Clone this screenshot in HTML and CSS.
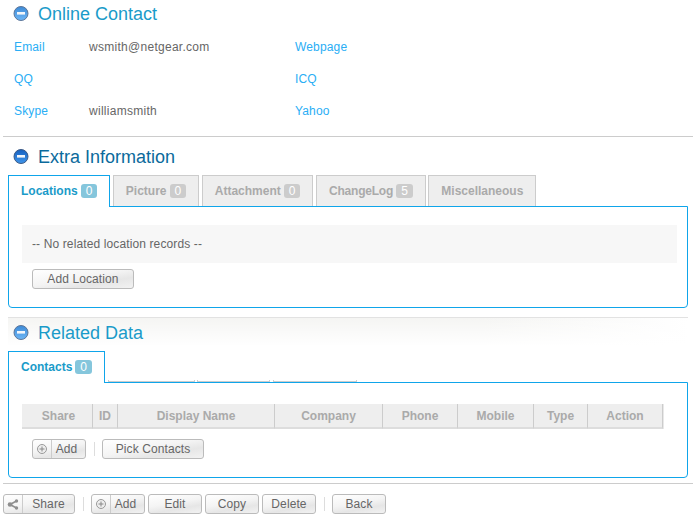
FILE: index.html

```html
<!DOCTYPE html>
<html lang="en">
<head>
  <meta charset="UTF-8">
  <meta name="viewport" content="width=device-width, initial-scale=1.0">
  <title>Contact Details</title>
  <link rel="stylesheet" href="styles.css">
</head>
<body>

  <h2 class="section-title">
    <svg class="collapse-icon" viewBox="0 0 16 16"><use href="#minus-icon"/></svg>
    Online Contact
  </h2>

  <div class="contact-grid">
    <span class="label">Email</span><span class="value">wsmith@netgear.com</span><span class="label">Webpage</span><span></span>
    <span class="label">QQ</span><span class="value"></span><span class="label">ICQ</span><span></span>
    <span class="label">Skype</span><span class="value">williamsmith</span><span class="label">Yahoo</span><span></span>
  </div>

  <h2 class="section-title section-ruled title-dark">
    <svg class="collapse-icon" viewBox="0 0 16 16"><use href="#minus-icon-dark"/></svg>
    Extra Information
  </h2>

  <div class="tabs">
    <div class="tab active">Locations <span class="badge">0</span></div>
    <div class="tab">Picture <span class="badge">0</span></div>
    <div class="tab">Attachment <span class="badge">0</span></div>
    <div class="tab tab-log">ChangeLog <span class="badge">5</span></div>
    <div class="tab">Miscellaneous</div>
  </div>
  <div class="panel panel-locations">
    <div class="empty-row">-- No related location records --</div>
    <div class="actions">
      <button class="btn btn-location">Add Location</button>
    </div>
  </div>

  <h2 class="section-title section-fade">
    <svg class="collapse-icon" viewBox="0 0 16 16"><use href="#minus-icon"/></svg>
    Related Data
  </h2>

  <div class="tabs tabs-related">
    <div class="tab active">Contacts <span class="badge">0</span></div>
    <div class="tab-ghost ghost-a"></div>
    <div class="tab-ghost ghost-b"></div>
    <div class="tab-ghost ghost-c"></div>
  </div>
  <div class="panel panel-contacts">
    <table class="contacts-table">
      <thead>
        <tr>
          <th class="col-share">Share</th>
          <th class="col-id">ID</th>
          <th class="col-name">Display Name</th>
          <th class="col-company">Company</th>
          <th class="col-phone">Phone</th>
          <th class="col-mobile">Mobile</th>
          <th class="col-type">Type</th>
          <th class="col-action">Action</th>
        </tr>
      </thead>
    </table>
    <div class="actions actions-contacts">
      <button class="btn btn-icon btn-add">
        <svg class="btn-glyph" viewBox="0 0 12 12"><use href="#plus-icon"/></svg>
        <span class="btn-text">Add</span>
      </button>
      <span class="sep"></span>
      <button class="btn btn-pick">Pick Contacts</button>
    </div>
  </div>

  <div class="toolbar">
    <button class="btn btn-icon btn-share">
      <svg class="btn-glyph" viewBox="0 0 12 12">
        <path d="M3 6.5 L9.5 3 M3 6.5 L9.5 10" stroke="#8f8f8f" stroke-width="1.6" fill="none"/>
        <circle cx="3" cy="6.5" r="2.3" fill="#8f8f8f"/>
        <circle cx="9.5" cy="3" r="1.7" fill="#8f8f8f"/>
        <circle cx="9.5" cy="10" r="1.7" fill="#8f8f8f"/>
      </svg>
      <span class="btn-text">Share</span>
    </button>
    <span class="sep"></span>
    <button class="btn btn-icon btn-add">
      <svg class="btn-glyph" viewBox="0 0 12 12"><use href="#plus-icon"/></svg>
      <span class="btn-text">Add</span>
    </button>
    <button class="btn btn-small">Edit</button>
    <button class="btn btn-small">Copy</button>
    <button class="btn btn-small">Delete</button>
    <span class="sep"></span>
    <button class="btn btn-small">Back</button>
  </div>

  <svg class="icon-defs" width="0" height="0">
    <defs>
      <linearGradient id="minus-fill" x1="0" y1="0" x2="0" y2="1">
        <stop offset="0" stop-color="#3d8ad6"/>
        <stop offset="1" stop-color="#6db6f6"/>
      </linearGradient>
      <linearGradient id="minus-fill-dark" x1="0" y1="0" x2="0" y2="1">
        <stop offset="0" stop-color="#1560c0"/>
        <stop offset="1" stop-color="#3f95ea"/>
      </linearGradient>
      <g id="minus-icon">
        <circle cx="8" cy="7.5" r="7" fill="url(#minus-fill)" stroke="#5d7699" stroke-width="1"/>
        <rect x="4" y="6" width="8" height="2.6" fill="#f2f6fb"/>
      </g>
      <g id="minus-icon-dark">
        <circle cx="8" cy="7.5" r="7" fill="url(#minus-fill-dark)" stroke="#3c5a86" stroke-width="1"/>
        <rect x="4" y="6" width="8" height="2.6" fill="#f2f6fb"/>
      </g>
      <g id="plus-icon">
        <circle cx="6" cy="6" r="4.5" fill="#eee" stroke="#999" stroke-width="1"/>
        <path d="M3.5 6 H8.5 M6 3.5 V8.5" stroke="#888" stroke-width="1" fill="none"/>
      </g>
    </defs>
  </svg>

</body>
</html>
```

FILE: styles.css

```css
* {
  box-sizing: border-box;
}

body {
  margin: 0;
  padding: 0 6px 0 3px;
  height: 522px;
  overflow: hidden;
  background-color: #fff;
  font-family: "Liberation Sans", Arial, sans-serif;
  font-size: 12px;
  color: #666;
}

.section-title {
  display: flex;
  align-items: center;
  gap: 9px;
  height: 28px;
  margin: 0;
  padding-left: 10px;
  font-size: 18px;
  font-weight: normal;
  color: #1a9bc9;
}

.collapse-icon {
  width: 16px;
  height: 16px;
}

.icon-defs {
  position: absolute;
}

.title-dark {
  color: #0b6a9c;
}

.section-ruled {
  height: 39px;
  padding-top: 2px;
  border-top: 1px solid #ccc;
}

.section-fade {
  width: 680px;
  height: 29px;
  margin: 9px 0 0 5px;
  padding: 2px 0 0 5px;
  border-top: 1px solid #e2e2e2;
  background: linear-gradient(to bottom, rgba(255, 255, 255, 0), #fff), linear-gradient(to right, #f5f5f3 70%, #fff);
}

.contact-grid {
  display: grid;
  grid-template-columns: 75px 206px 75px 1fr;
  grid-auto-rows: 32px;
  align-items: center;
  align-content: start;
  height: 108px;
  padding: 3px 0 0 11px;
}

.label {
  color: #2aaef5;
  letter-spacing: 0.15px;
}

.value {
  color: #666;
  letter-spacing: 0.28px;
}

.tabs {
  display: flex;
  gap: 2.5px;
  height: 32px;
  margin-left: 5px;
}

.tabs-related {
  margin-top: 5px;
}

.tab {
  display: flex;
  align-items: center;
  justify-content: center;
  gap: 3px;
  height: 31px;
  padding: 0 12px;
  border: 1px solid #ccc;
  border-bottom: 0;
  background-color: #eee;
  font-weight: bold;
  color: #aaa;
}

.tab-log {
  letter-spacing: -0.2px;
}

.tab.active {
  position: relative;
  z-index: 1;
  height: 32px;
  padding-bottom: 1px;
  background-color: #fff;
  border: 1px solid #0fa5ea;
  border-bottom: 0;
  color: #1a9bc9;
}

/* empty tabs of the related block, only their bottom edge shows */
.tab-ghost {
  align-self: flex-end;
  height: 2px;
  margin-bottom: 1px;
  border: 1px solid #ccc;
  border-top: 0;
}

.ghost-a { width: 87px; }
.ghost-b { width: 73px; }
.ghost-c { width: 84px; }

.badge {
  display: inline-block;
  height: 14px;
  padding: 0 5px;
  border-radius: 3px;
  background-color: #ccc;
  font-weight: normal;
  line-height: 14px;
  letter-spacing: 0;
  color: #fff;
}

.active .badge {
  background-color: #85c6dc;
}

.panel {
  width: 680px;
  margin: -1px 0 0 5px;
  border: 1px solid #0fa5ea;
  border-radius: 0 0 4px 4px;
  padding: 18px 10px 0 13px;
}

.panel-locations {
  height: 102px;
}

.panel-contacts {
  height: 96px;
  padding-top: 21px;
}

.empty-row {
  height: 38px;
  padding-left: 10px;
  background-color: #f7f7f7;
  line-height: 38px;
  letter-spacing: 0.12px;
}

.actions {
  display: flex;
  align-items: center;
  padding: 6px 0 0 10px;
}

.actions-contacts {
  padding-top: 10px;
}

.btn {
  height: 20px;
  padding: 0;
  border: 1px solid #bbb;
  border-radius: 3px;
  background: linear-gradient(170deg, #fff 0, #f4f4f4 45%, #e6e6e6 70%, #f2f2f2 100%);
  font-family: inherit;
  font-size: 12px;
  letter-spacing: 0.1px;
  color: #666;
}

.btn-location {
  width: 102px;
}

.btn-pick {
  width: 102px;
}

.btn-small {
  width: 54px;
}

.btn-icon {
  display: flex;
  align-items: center;
  padding-left: 3px;
}

.btn-add {
  width: 54px;
}

.btn-add .btn-text {
  padding-right: 4px;
}

.btn-share {
  width: 72px;
}

.btn-glyph {
  flex: none;
  width: 12px;
  height: 12px;
}

.btn-text {
  flex: 1;
  height: 18px;
  margin-left: 3px;
  border-left: 1px solid #ccc;
  line-height: 18px;
  text-align: center;
}

.sep {
  width: 1px;
  height: 14px;
  margin: 0 7px 0 8px;
  background-color: #ddd;
}

.contacts-table {
  width: 641px;
  border-collapse: separate;
  border-spacing: 0;
  table-layout: fixed;
  box-shadow: 1px 0 #e8e8e8;
}

.contacts-table th {
  height: 25px;
  padding: 0;
  background-color: #eee;
  border-right: 1px solid #ccc;
  border-bottom: 2px solid #ddd;
  font-size: 12px;
  color: #aaa;
  text-align: center;
}

.contacts-table th.col-share {
  padding-left: 3px;
}

.col-share { width: 71px; }
.col-id { width: 25px; }
.col-name { width: 157px; }
.col-company { width: 108px; }
.col-phone { width: 75px; }
.col-mobile { width: 76px; }
.col-type { width: 54px; }
.col-action { width: 75px; }

.toolbar {
  display: flex;
  align-items: flex-start;
  gap: 3px;
  width: 690px;
  height: 42px;
  margin-top: 5px;
  padding-top: 10px;
  border-top: 1px solid #ccc;
}

.toolbar .sep {
  margin: 3px 4px 0 5px;
}
```
